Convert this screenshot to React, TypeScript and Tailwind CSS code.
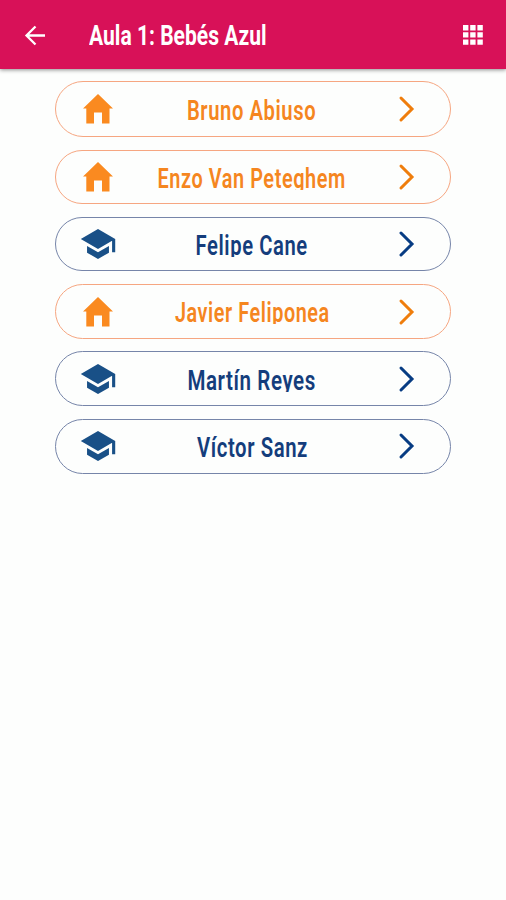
import clsx from "clsx";

type Place = "home" | "school";

interface Student {
  name: string;
  place: Place;
  scale: number;
  row: string;
}

// Row heights and gaps follow the rounding of the original list
const students: Student[] = [
  { name: "Bruno Abiuso", place: "home", scale: 0.722, row: "h-14" },
  { name: "Enzo Van Peteghem", place: "home", scale: 0.71, row: "mt-[13px] h-[54px]" },
  { name: "Felipe Cane", place: "school", scale: 0.722, row: "mt-[13px] h-[54px]" },
  { name: "Javier Feliponea", place: "home", scale: 0.708, row: "mt-[13px] h-[55px]" },
  { name: "Martín Reyes", place: "school", scale: 0.733, row: "mt-3 h-[55px] pt-px" },
  { name: "Víctor Sanz", place: "school", scale: 0.726, row: "mt-[13px] h-[55px] pb-px" },
];

function HomeIcon() {
  return (
    <svg width="36" height="30" viewBox="0 0 36 30" fill="#fa8a20">
      <path d="M18 0L33 14.5H29.5V29.5H22V18.5H14V29.5H6.3V14.5H3z" />
    </svg>
  );
}

function SchoolIcon() {
  return (
    <svg width="36" height="30" viewBox="0.5 3 23 18" preserveAspectRatio="none" fill="#195087">
      <path d="M5 13.18v4L12 21l7-3.82v-4L12 17l-7-3.82zM12 3L1 9l11 6 9-4.91V17h2V9L12 3z" />
    </svg>
  );
}

function StudentRow({ student }: { student: Student }) {
  const isHome = student.place === "home";

  return (
    <button
      className={clsx(
        "flex w-[396px] shrink-0 items-center rounded-full border pl-6 pr-[34px]",
        student.row,
        isHome ? "border-[#f6a681] text-[#f5861f]" : "border-[#7685a9] text-[#143d7c]"
      )}
    >
      {isHome ? <HomeIcon /> : <SchoolIcon />}
      <span className="mb-0.5 mr-2.5 flex h-[27px] flex-1 justify-center overflow-hidden">
        <span
          className="whitespace-nowrap text-[28px] font-semibold leading-[31px] tracking-[0.8px]"
          style={{ transform: `scaleX(${student.scale})` }}
        >
          {student.name}
        </span>
      </span>
      <svg
        width="18"
        height="28"
        viewBox="0 0 18 28"
        fill="none"
        stroke={isHome ? "#ef7d0c" : "#073c83"}
        strokeWidth="3"
        strokeLinecap="round"
      >
        <path d="M3 3L14 14L3 25" />
      </svg>
    </button>
  );
}

export default function App() {
  return (
    <div className="flex h-[900px] w-[506px] flex-col overflow-hidden bg-[#fdfefd] font-['Roboto',sans-serif]">
      <header className="flex h-[69px] shrink-0 items-center bg-[#d81158] pl-6 pr-[23px] pt-0.5 text-white shadow-[0_1px_4px_rgba(0,0,0,0.45)]">
        <svg width="22" height="22" viewBox="0 0 22 22" fill="none" stroke="currentColor" strokeWidth="2.3">
          <path d="M11.5 1.5L2.5 10.5L11.5 19.5M2.5 10.5H21" />
        </svg>
        <h1 className="ml-[43px] flex-1 origin-left scale-x-[0.752] whitespace-nowrap text-[28px] font-bold leading-[34px]">
          Aula 1: Bebés Azul
        </h1>
        <svg className="-mt-0.5" width="20" height="20" viewBox="0 0 20 20" fill="currentColor">
          <path d="M0 0h5.4v5.4H0zM7.2 0h5.4v5.4H7.2zM14.4 0h5.4v5.4h-5.4zM0 7.2h5.4v5.4H0zM7.2 7.2h5.4v5.4H7.2zM14.4 7.2h5.4v5.4h-5.4zM0 14.4h5.4v5.4H0zM7.2 14.4h5.4v5.4H7.2zM14.4 14.4h5.4v5.4h-5.4z" />
        </svg>
      </header>
      <main className="flex flex-col items-center pt-3">
        {students.map((student) => (
          <StudentRow key={student.name} student={student} />
        ))}
      </main>
    </div>
  );
}
